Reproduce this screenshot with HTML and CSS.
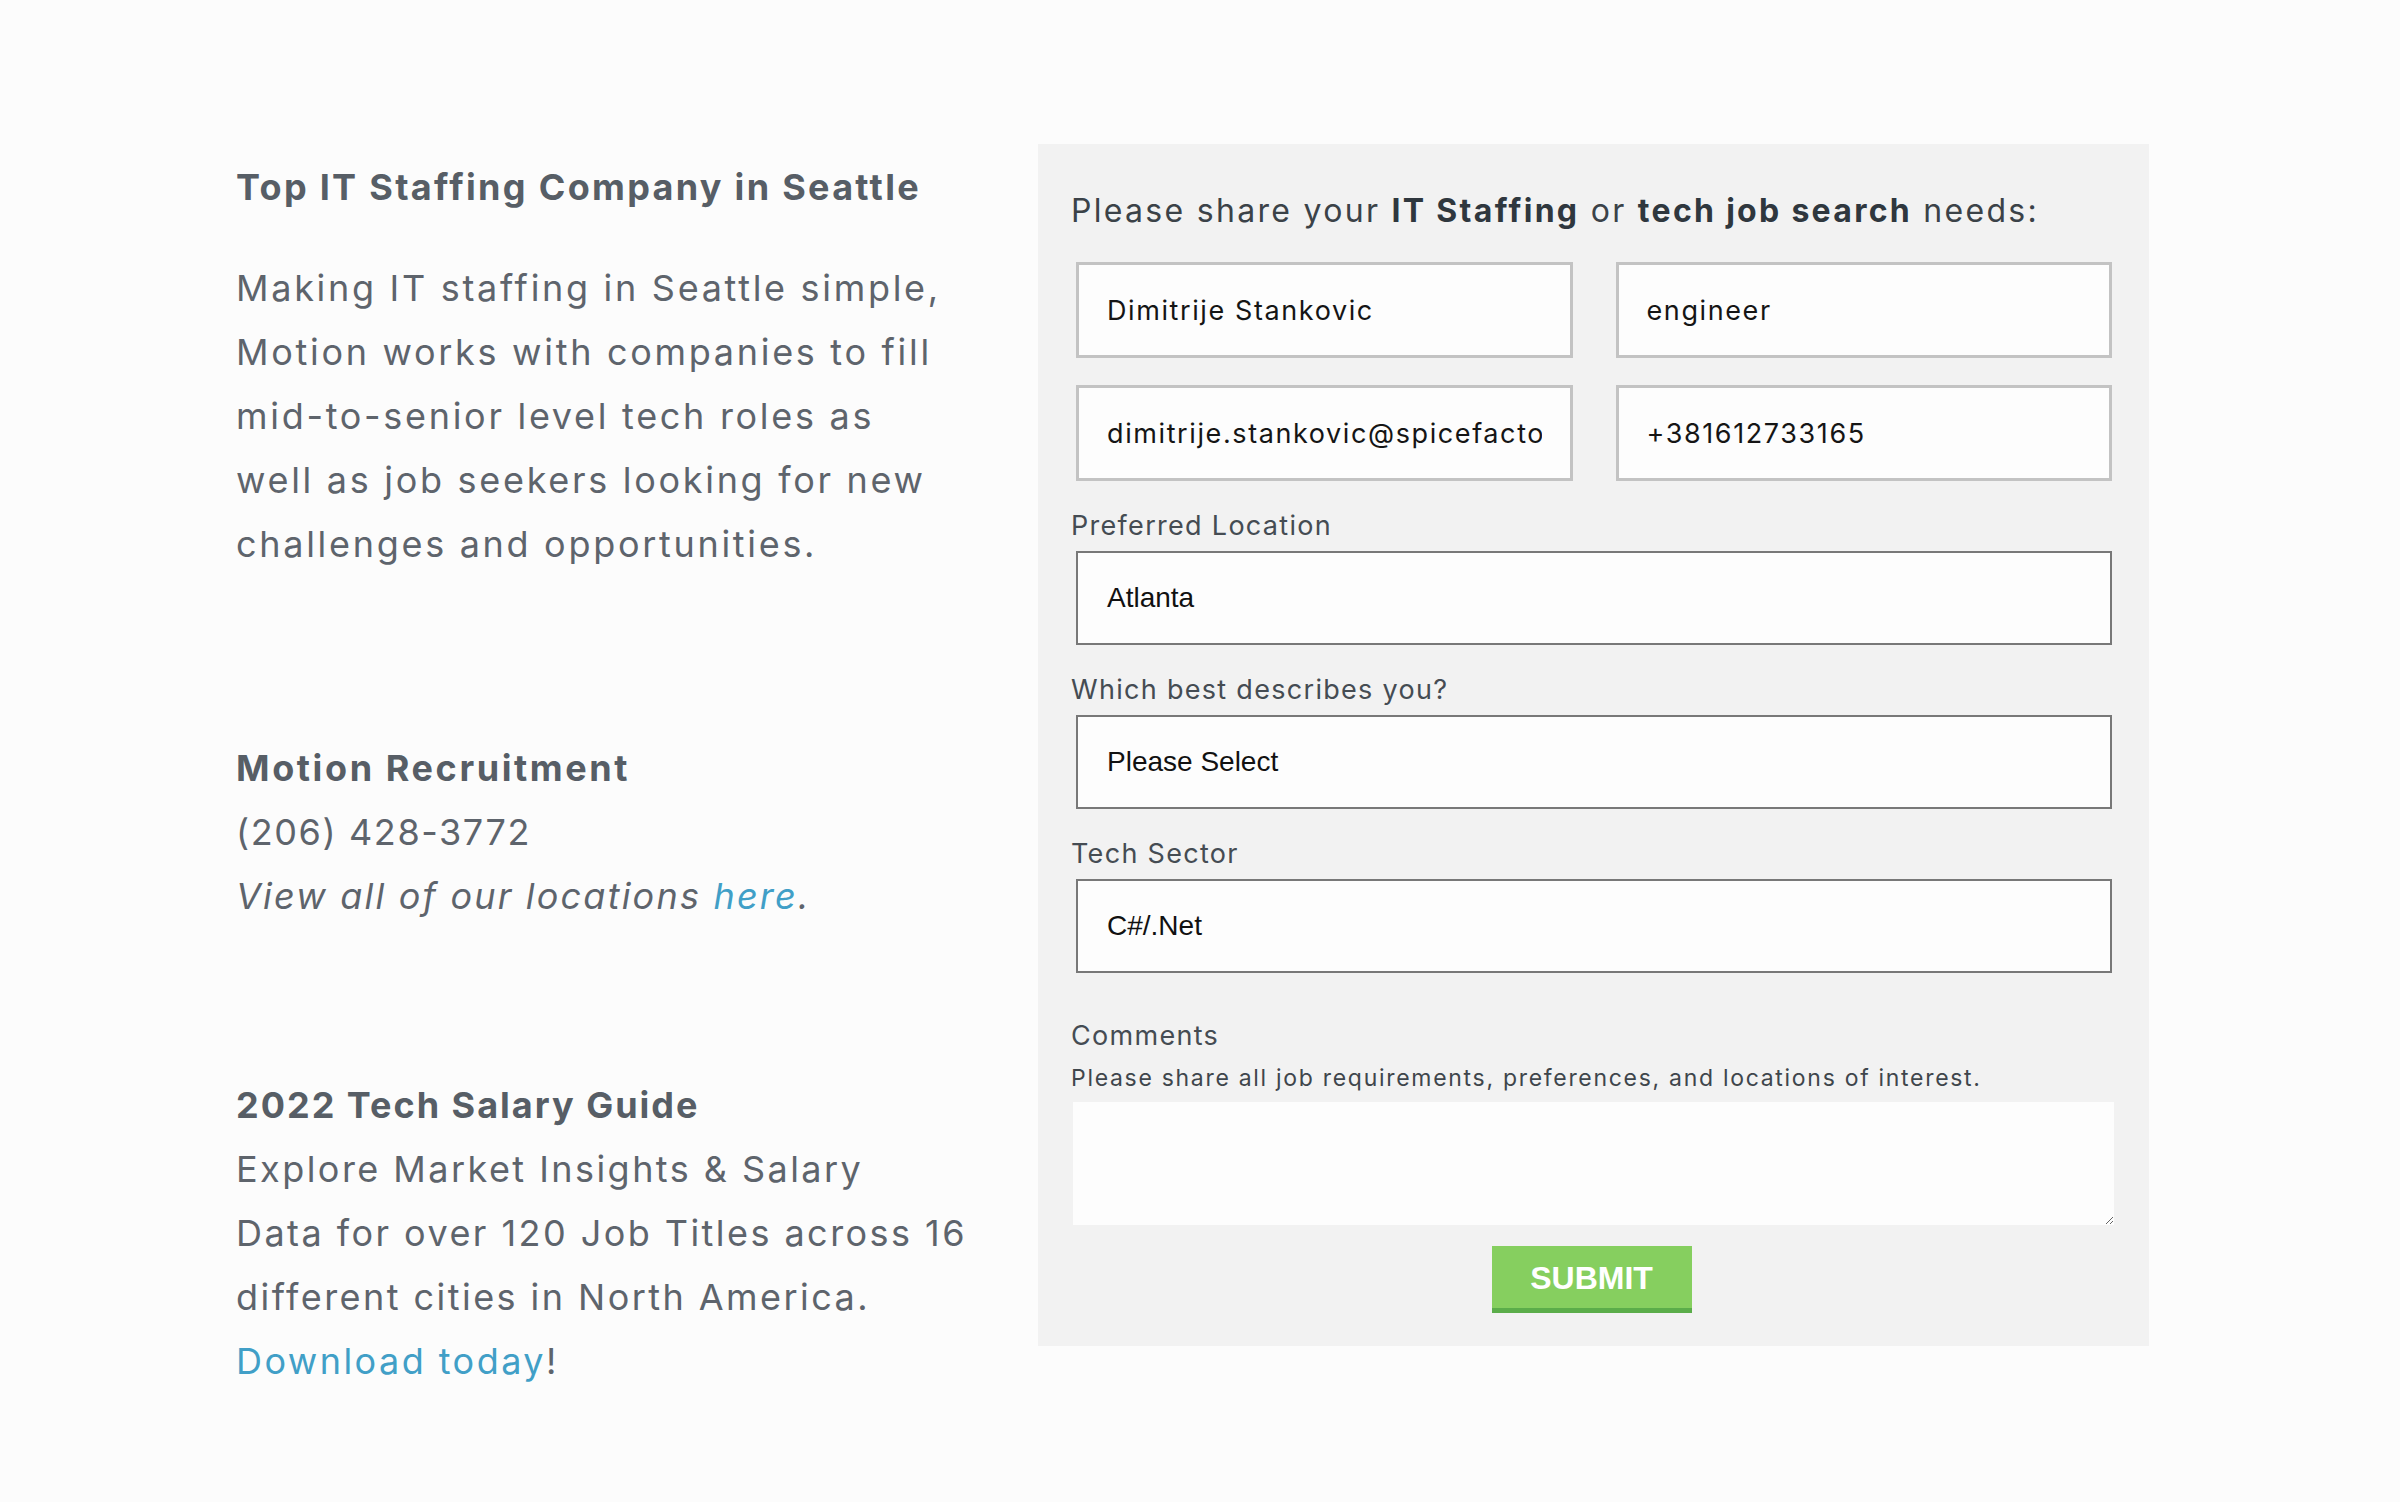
FILE: index.html
```html
<!DOCTYPE html>
<html lang="en">
<head>
<meta charset="utf-8">
<title>Top IT Staffing Company in Seattle</title>
<link rel="stylesheet" href="styles.css">
</head>
<body>
<main class="page">
  <section class="info">
    <h2 class="info-title">Top IT Staffing Company in Seattle</h2>
    <p class="info-text">Making IT staffing in Seattle simple,<br>Motion works with companies to fill<br>mid-to-senior level tech roles as<br>well as job seekers looking for new<br>challenges and opportunities.</p>

    <div class="contact">
      <h3 class="block-title">Motion Recruitment</h3>
      <p class="line phone">(206) 428-3772</p>
      <p class="line italic">View all of our locations <a href="#" class="link">here</a>.</p>
    </div>

    <div class="guide">
      <h3 class="block-title guide-title">2022 Tech Salary Guide</h3>
      <p class="line guide-text">Explore Market Insights &amp; Salary<br>Data for over 120 Job Titles across 16<br>different cities in North America.<br><a href="#" class="link">Download today</a>!</p>
    </div>
  </section>

  <form class="panel" onsubmit="return false">
    <p class="panel-title">Please share your <strong>IT Staffing</strong> or <strong>tech job search</strong> needs:</p>

    <div class="grid">
      <input class="field" type="text" value="Dimitrije Stankovic">
      <input class="field" type="text" value="engineer">
      <input class="field" type="text" value="dimitrije.stankovic@spicefactory.co">
      <input class="field" type="text" value="+381612733165">
    </div>

    <label class="label first">Preferred Location</label>
    <div class="select"><span>Atlanta</span></div>

    <label class="label">Which best describes you?</label>
    <div class="select"><span>Please Select</span></div>

    <label class="label">Tech Sector</label>
    <div class="select"><span>C#/.Net</span></div>

    <label class="label comments">Comments</label>
    <p class="hint">Please share all job requirements, preferences, and locations of interest.</p>
    <textarea class="textarea"></textarea>

    <div class="actions">
      <button class="submit" type="submit">SUBMIT</button>
    </div>
  </form>
</main>
</body>
</html>
```

FILE: styles.css
```css
html, body {
  margin: 0;
  padding: 0;
}

body {
  background: #fcfcfc;
  font-family: Inter, "Open Sans", "Liberation Sans", sans-serif;
  color: #5e646c;
}

.page {
  display: flex;
  align-items: flex-start;
  padding: 144px 0 0 236px;
  gap: 50px;
}

.info {
  width: 752px;
  padding-top: 11px;
  white-space: nowrap;
}

.info-title {
  margin: 0;
  font-size: 36px;
  font-weight: 700;
  line-height: 64px;
  letter-spacing: 2.3px;
  color: #575e66;
}

.info-text {
  margin: 37px 0 0;
  font-size: 36px;
  line-height: 64px;
  font-weight: 400;
  letter-spacing: 2.7px;
}

.contact {
  margin-top: 160px;
}

.guide {
  margin-top: 145px;
}

.block-title {
  margin: 0;
  font-size: 36px;
  font-weight: 700;
  line-height: 64px;
  letter-spacing: 2.6px;
  color: #575e66;
}

.block-title.guide-title {
  letter-spacing: 2px;
}

.line {
  margin: 0;
  font-size: 36px;
  line-height: 64px;
}

.phone {
  letter-spacing: 1.6px;
}

.italic {
  font-style: italic;
  letter-spacing: 2.2px;
}

.guide-text {
  letter-spacing: 2.45px;
}

.link {
  color: #419fc7;
  text-decoration: none;
}

.panel {
  width: 1111px;
  box-sizing: border-box;
  background: #f2f2f2;
  padding: 43px 37px 33px 33px;
  display: flex;
  flex-direction: column;
}

.panel-title {
  margin: 0;
  font-size: 32px;
  line-height: 48px;
  letter-spacing: 2.3px;
  color: #3b4248;
}

.panel-title strong {
  color: #2f373e;
  font-weight: 700;
}

.grid {
  display: grid;
  grid-template-columns: 1fr 1fr;
  column-gap: 43px;
  row-gap: 27px;
  margin: 27px 0 0 5px;
}

.field {
  box-sizing: border-box;
  height: 96px;
  width: 100%;
  min-width: 0;
  border: 3px solid #c3c3c3;
  background: #fdfdfd;
  padding: 0 28px;
  font-family: Inter, "Open Sans", sans-serif;
  font-size: 27px;
  letter-spacing: 1.6px;
  color: #151515;
  outline: none;
}

.label {
  display: block;
  margin-top: 27px;
  font-size: 27px;
  line-height: 36px;
  letter-spacing: 1.3px;
  color: #454c53;
}

.label.first {
  margin-top: 27px;
}

.label.comments {
  margin-top: 45px;
}

.select {
  box-sizing: border-box;
  margin: 7px 0 0 5px;
  height: 94px;
  border: 2px solid #787878;
  background: #fdfdfd;
  display: flex;
  align-items: center;
  padding-left: 29px;
  font-family: "Liberation Sans", Arial, sans-serif;
  font-size: 28px;
  color: #111;
}

.hint {
  margin: 9px 0 0;
  font-size: 23px;
  line-height: 30px;
  letter-spacing: 1.7px;
  color: #3f464c;
}

.textarea {
  display: block;
  box-sizing: border-box;
  margin: 9px -2px 0 2px;
  height: 123px;
  border: none;
  background: #fdfdfd;
  resize: vertical;
  outline: none;
}

.actions {
  display: flex;
  justify-content: center;
  margin-top: 21px;
}

.submit {
  width: 200px;
  height: 67px;
  border: none;
  border-bottom: 5px solid #5bad4a;
  background: #86cf5f;
  color: #ffffff;
  font-family: "Liberation Sans", Arial, sans-serif;
  font-weight: 700;
  font-size: 32px;
  padding: 2px 0 0;
  cursor: pointer;
}
```
